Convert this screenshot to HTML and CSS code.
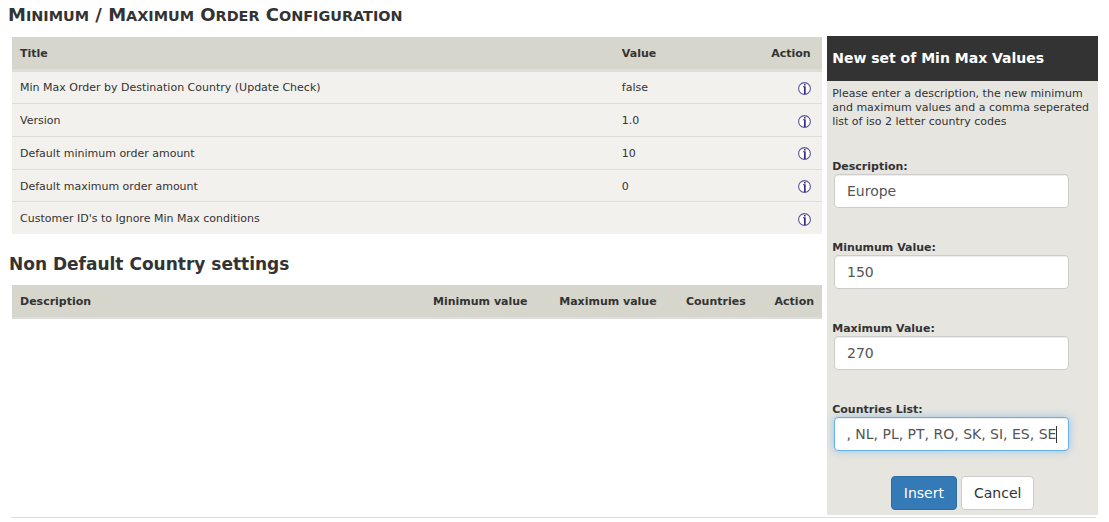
FILE: index.html
```
<!DOCTYPE html>
<html lang="en">
<head>
<meta charset="utf-8">
<title>Minimum / Maximum Order Configuration</title>
<link rel="stylesheet" href="styles.css">
</head>
<body>
<svg class="defs" width="0" height="0" aria-hidden="true">
  <symbol id="info" viewBox="0 0 13 13">
    <circle cx="6.5" cy="6.5" r="5.9" fill="#fff" stroke="#5a5496" stroke-width="1.1"/>
    <path d="M6 2h1.6v1.6H6zM5 4.3h2.7V12H6V5.2H5z" fill="#352c88"/>
  </symbol>
</svg>
<div class="page">
  <main class="content">
    <h1 class="page-title"><span>Minimum</span> / <span>Maximum</span> <span>Order</span> <span>Configuration</span></h1>
    <div class="table settings">
      <div class="row head"><span>Title</span><span>Value</span><span class="action">Action</span></div>
      <div class="row first"><span>Min Max Order by Destination Country (Update Check)</span><span>false</span><svg class="icon"><use href="#info"/></svg></div>
      <div class="row"><span>Version</span><span>1.0</span><svg class="icon"><use href="#info"/></svg></div>
      <div class="row"><span>Default minimum order amount</span><span>10</span><svg class="icon raised"><use href="#info"/></svg></div>
      <div class="row short"><span>Default maximum order amount</span><span>0</span><svg class="icon"><use href="#info"/></svg></div>
      <div class="row last"><span>Customer ID's to Ignore Min Max conditions</span><span></span><svg class="icon"><use href="#info"/></svg></div>
    </div>
    <h2 class="section-title">Non Default Country settings</h2>
    <div class="table countries">
      <div class="row head"><span>Description</span><span>Minimum value</span><span>Maximum value</span><span>Countries</span><span>Action</span></div>
    </div>
  </main>
  <aside class="panel">
    <h3 class="panel-title">New set of Min Max Values</h3>
    <form class="form">
      <p class="intro">Please enter a description, the new minimum and maximum values and a comma seperated list of iso 2 letter country codes</p>
      <div class="field"><label for="description">Description:</label><input class="control" id="description" type="text" value="Europe"></div>
      <div class="field"><label for="minimum">Minumum Value:</label><input class="control" id="minimum" type="text" value="150"></div>
      <div class="field"><label for="maximum">Maximum Value:</label><input class="control" id="maximum" type="text" value="270"></div>
      <div class="field"><label>Countries List:</label><div class="control focused"><span>, NL, PL, PT, RO, SK, SI, ES, SE</span><i class="caret"></i></div></div>
      <div class="buttons"><button class="btn primary" type="button">Insert</button><button class="btn" type="button">Cancel</button></div>
    </form>
  </aside>
</div>
<hr class="rule">
</body>
</html>
```
FILE: styles.css
```
* { box-sizing: border-box; }
body {
  margin: 0;
  background: #fff;
  color: #333;
  font: 11px/14px "DejaVu Sans", Verdana, sans-serif;
}
.defs { display: block; }
.page { display: flex; height: 515px; }
.content { width: 827px; padding: 0 5px 0 12px; }
.page-title, .section-title { margin: 0; font-weight: bold; white-space: nowrap; }
.page-title {
  height: 37px;
  margin-left: -4px;
  padding-top: 4px;
  font-size: 18px;
  line-height: 22px;
}
.page-title span { display: inline-block; font-size: 14.4px; text-transform: uppercase; }
.page-title span::first-letter { font-size: 18px; }
.section-title {
  height: 51px;
  margin-left: -3px;
  padding-top: 19px;
  font-size: 17px;
  line-height: 22px;
}
.row {
  display: grid;
  align-items: center;
  height: 33px;
  padding: 0 8px;
  background: #f2f1ed;
  border-bottom: 1px solid #ddd;
}
.row span { padding-top: 2px; }
.row.first span { padding-top: 0; }
.row.first, .row.short { height: 32px; }
.row.last { height: 32px; border-bottom: 0; }
.row.head {
  height: 35px;
  background: #d6d6cc;
  border-bottom: 3px solid #ddd;
  font-weight: bold;
}
.settings .row { grid-template-columns: 601.8px 1fr 46px; }
.settings .action { justify-self: end; padding-right: 3.4px; }
.countries .row.head { grid-template-columns: 413px 126.2px 126.8px 88.6px 1fr; height: 34px; border-bottom-width: 2px; }
.icon { width: 13px; height: 13px; margin: 2px 3px 0 0; justify-self: end; }
.icon.raised { margin-top: 0; }
.panel { width: 271px; height: 479px; margin-top: 36px; background: #e6e5e0; }
.panel-title {
  height: 45px;
  margin: 0;
  padding-left: 5.2px;
  background: #333;
  color: #fff;
  font-size: 14px;
  line-height: 44px;
}
.form { padding: 6px 5px 0 5.2px; }
.intro { height: 73px; margin: 0; }
.field { height: 81px; }
.field label { display: block; height: 14px; font-weight: bold; }
.control {
  display: flex;
  align-items: center;
  width: 235px;
  height: 34px;
  margin: 0 0 0 1.8px;
  padding: 0 12px;
  border: 1px solid #ccc;
  border-radius: 4px;
  background: #fff;
  color: #555;
  font: 14px/20px "DejaVu Sans", Verdana, sans-serif;
  white-space: nowrap;
  box-shadow: inset 0 1px 1px rgba(0, 0, 0, .075);
}
.focused {
  padding-left: 11.4px;
  border-color: #66afe9;
  box-shadow: inset 0 1px 1px rgba(0, 0, 0, .075), 0 0 8px rgba(102, 175, 233, .6);
}
.caret { width: 1px; height: 17px; flex: none; background: #333; }
.buttons { display: flex; justify-content: center; gap: 4px; margin-top: -8px; }
.btn {
  height: 34px;
  padding: 0 12px;
  border: 1px solid #ccc;
  border-radius: 4px;
  background: #fff;
  color: #333;
  font: 14px/20px "DejaVu Sans", Verdana, sans-serif;
}
.primary { border-color: #2e6da4; background: #337ab7; color: #fff; }
.rule { width: 1085px; height: 1px; margin: 2px 0 0 11px; border: 0; background: #ddd; }
```
